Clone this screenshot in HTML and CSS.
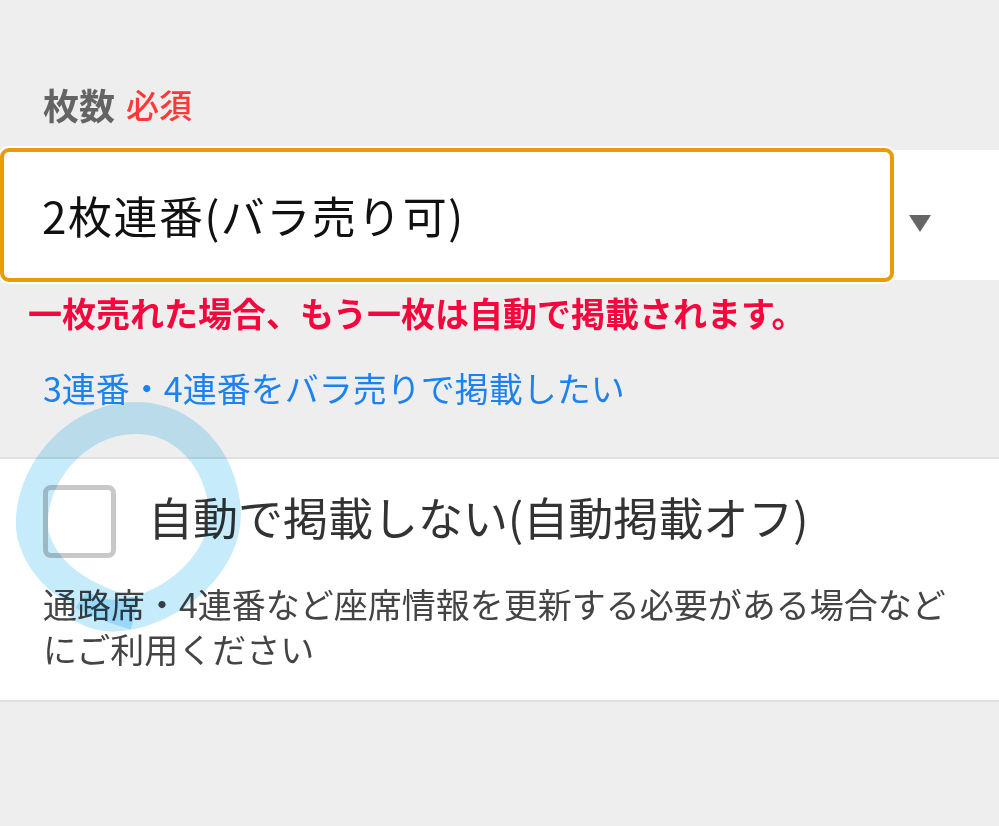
FILE: index.html
```html
<!DOCTYPE html>
<html lang="ja">
<head>
    <meta charset="UTF-8">
    <meta name="viewport" content="width=device-width, initial-scale=1.0">
    <title>枚数</title>
    <link rel="stylesheet" href="styles.css">
</head>
<body>
    <div class="field">
        <div class="field-label">
            <span class="label-text">枚数</span>
            <span class="required">必須</span>
        </div>

        <div class="select-row">
            <div class="select-box">2枚連番(バラ売り可)</div>
            <div class="select-arrow"></div>
        </div>

        <p class="notice">一枚売れた場合、もう一枚は自動で掲載されます。</p>
        <a class="link" href="#">3連番・4連番をバラ売りで掲載したい</a>
    </div>

    <div class="panel">
        <label class="check-row">
            <span class="checkbox"></span>
            <span class="check-label">自動で掲載しない(自動掲載オフ)</span>
        </label>
        <p class="check-note">通路席・4連番など座席情報を更新する必要がある場合などにご利用ください</p>
    </div>

    <!-- hand drawn marker over the checkbox -->
    <svg class="marker" width="999" height="826" viewBox="0 0 999 826">
        <path d="M 135 614 C 90 602, 45 580, 33 535 C 25 490, 62 428, 122 419 C 178 411, 216 452, 224 502 C 231 550, 192 590, 152 607" />
        <path d="M 152 607 C 127 617, 102 621, 78 604" />
    </svg>
</body>
</html>
```

FILE: styles.css
```css
body {
    margin: 0;
    background: #eeeeee;
    font-family: "Noto Sans CJK JP", "Noto Sans", sans-serif;
    position: relative;
    min-height: 826px;
}

.field {
    display: flex;
    flex-direction: column;
}

.field-label {
    display: flex;
    align-items: center;
    gap: 11px;
    padding: 84px 43px 0;
    height: 40px;
}

.label-text {
    font-size: 36px;
    font-weight: bold;
    color: #646464;
}

.required {
    font-size: 33px;
    font-weight: 500;
    color: #ff3838;
}

.select-row {
    display: flex;
    align-items: center;
    margin-top: 26px;
    height: 130px;
    background: #ffffff;
}

.select-box {
    box-sizing: border-box;
    width: 894px;
    height: 134px;
    display: flex;
    align-items: center;
    padding-left: 38px;
    border: 4px solid #e89c0a;
    border-radius: 9px;
    box-shadow: 0 0 0 2px #ffffff;
    background: #ffffff;
    font-size: 44px;
    letter-spacing: 1.5px;
    color: #111111;
}

.select-arrow {
    margin: 17px 0 0 15px;
    width: 0;
    height: 0;
    border-left: 11px solid transparent;
    border-right: 11px solid transparent;
    border-top: 17px solid #666666;
}

.notice {
    margin: 13px 0 0;
    padding-left: 28px;
    font-size: 34px;
    line-height: 40px;
    font-weight: bold;
    color: #f5063c;
}

.link {
    margin-top: 35px;
    padding-left: 43px;
    font-size: 34px;
    line-height: 40px;
    color: #1c82f0;
    text-decoration: none;
}

.panel {
    margin-top: 49px;
    background: #ffffff;
    border-top: 2px solid #e0e0e0;
    border-bottom: 2px solid #e0e0e0;
    padding: 26px 43px 29px;
}

.check-row {
    display: flex;
    align-items: center;
    gap: 32px;
}

.checkbox {
    box-sizing: border-box;
    width: 73px;
    height: 73px;
    border: 5px solid #c8c8c8;
    border-radius: 8px;
    background: #ffffff;
}

.check-label {
    margin-top: -10px;
    font-size: 45px;
    color: #333333;
}

.check-note {
    margin: 23px 0 0;
    font-size: 34px;
    line-height: 45px;
    color: #444444;
}

.marker {
    position: absolute;
    top: 0;
    left: 0;
    pointer-events: none;
    mix-blend-mode: multiply;
}

.marker path {
    fill: none;
    stroke: #c6ebfb;
    stroke-width: 32;
    stroke-linecap: butt;
    mix-blend-mode: multiply;
}
```
